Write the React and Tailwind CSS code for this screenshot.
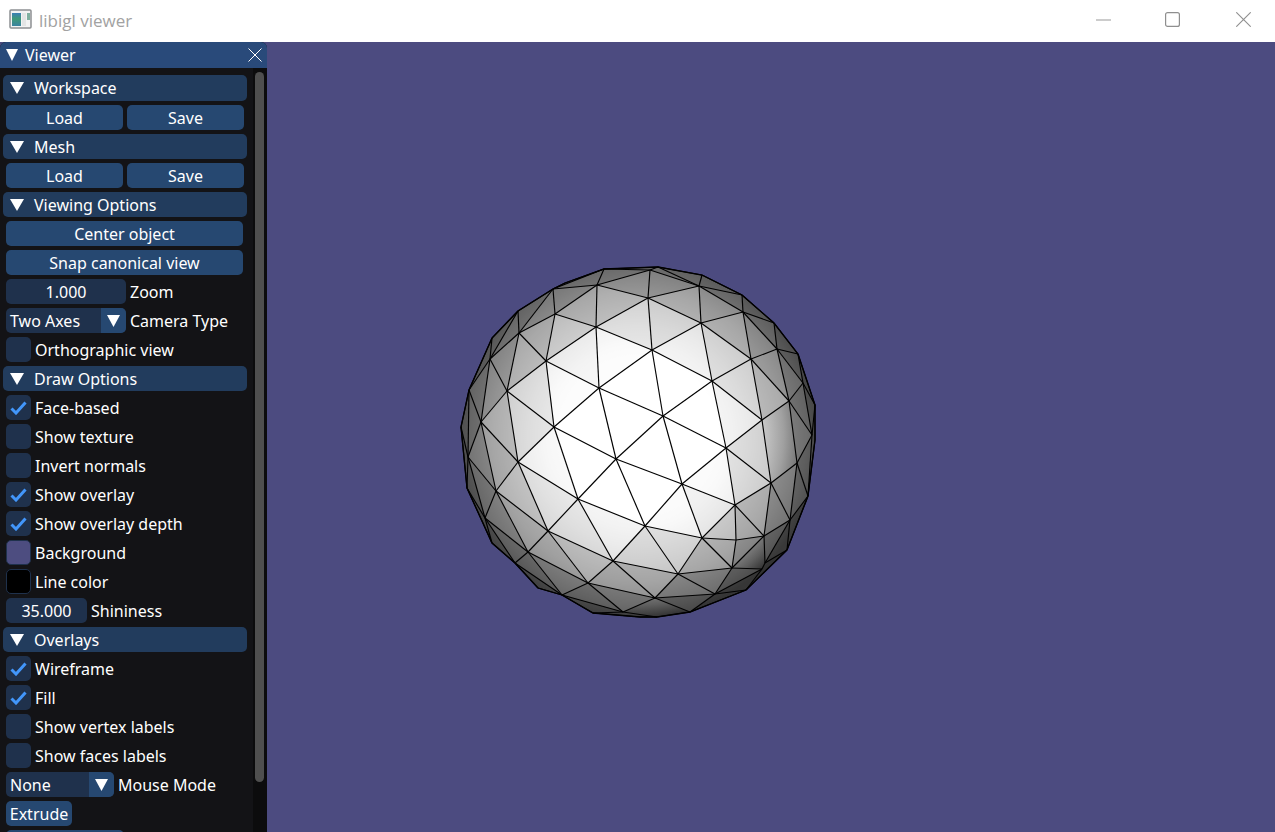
import React from "react";

const E = `604,269 597,285|604,269 553,289|604,269 565,283|565,283 553,289|553,289 597,285|597,285 650,270|553,289 555,314|597,285 555,314|597,285 596,327|555,314 596,327|555,314 519,333|553,289 519,333|553,289 518,311|518,311 519,333|519,333 490,359|518,311 490,359|518,311 492,338|492,338 490,359|492,338 469,390|490,359 469,390|490,359 481,422|490,359 507,391|519,333 507,391|519,333 546,361|555,314 546,361|596,327 546,361|596,327 599,388|546,361 599,388|546,361 507,391|546,361 554,427|599,388 554,427|507,391 554,427|507,391 481,422|469,390 481,422|469,390 461,427|469,390 468,457|461,427 468,457|481,422 468,457|481,422 496,491|507,391 518,462|481,422 518,462|554,427 518,462|554,427 578,499|554,427 616,459|599,388 616,459|599,388 652,350|599,388 663,416|596,327 652,350|596,327 648,298|597,285 648,298|648,298 652,350|648,298 701,323|701,323 652,350|699,286 701,323|648,298 699,286|650,270 648,298|650,270 699,286|702,275 699,286|658,267 702,275|658,267 699,286|650,270 658,267|604,269 650,270|604,269 658,267|699,286 742,295|702,275 742,295|699,286 743,312|742,295 743,312|701,323 743,312|743,312 774,323|742,295 774,323|743,312 777,349|774,323 777,349|774,323 798,354|777,349 803,383|798,354 803,383|777,349 798,354|777,349 751,359|743,312 751,359|701,323 751,359|701,323 712,381|751,359 712,381|652,350 712,381|652,350 663,416|712,381 663,416|712,381 726,448|751,359 762,420|712,381 762,420|777,349 789,401|751,359 789,401|762,420 789,401|789,401 803,383|803,383 815,405|798,354 815,405|803,383 812,435|815,405 812,435|789,401 812,435|789,401 797,463|762,420 771,483|762,420 726,448|771,483 797,463|797,463 812,435|812,435 808,496|815,405 815,440|815,440 808,496|797,463 808,496|726,448 771,483|726,448 682,484|726,448 735,505|771,483 735,505|682,484 735,505|663,416 682,484|616,459 682,484|663,416 616,459|663,416 726,448|682,484 645,526|682,484 702,538|735,505 702,538|735,505 736,540|735,505 764,536|771,483 764,536|771,483 790,520|797,463 790,520|808,496 790,520|790,520 764,536|702,538 736,540|736,540 764,536|645,526 702,538|578,499 645,526|616,459 578,499|616,459 645,526|702,538 678,574|702,538 732,568|736,540 732,568|764,536 732,568|764,536 765,563|790,520 787,550|790,520 765,563|808,496 787,550|787,550 765,563|787,550 746,590|765,563 762,569|732,568 762,569|732,568 678,574|732,568 715,594|762,569 715,594|762,569 746,590|746,590 715,594|746,590 690,612|715,594 690,612|715,594 655,598|678,574 715,594|678,574 655,598|655,598 690,612|690,612 657,617|655,598 623,612|655,598 588,583|678,574 613,561|645,526 678,574|645,526 613,561|613,561 588,583|613,561 655,598|613,561 548,531|578,499 613,561|578,499 548,531|518,462 578,499|518,462 548,531|518,462 496,491|496,491 548,531|496,491 528,552|496,491 485,518|485,518 528,552|548,531 528,552|548,531 588,583|528,552 588,583|528,552 515,563|528,552 562,595|515,563 562,595|588,583 562,595|588,583 623,612|562,595 623,612|562,595 593,613|593,613 640,617|640,617 657,617|623,612 657,617|593,613 623,612|485,518 515,563|485,518 492,543|492,543 515,563|515,563 538,588|538,588 562,595|467,488 485,518|468,457 485,518|468,457 496,491|468,457 467,488|461,427 467,488|467,488 492,543`
  .split("|")
  .map((e) => e.split(" ").map((p) => p.split(",").map(Number)));

const OUTLINE = "604,269 658,267 702,275 742,295 774,323 798,354 815,405 815,440 808,496 787,550 746,590 690,612 657,617 640,617 593,613 562,595 538,588 515,563 492,543 467,488 461,427 469,390 492,338 518,311 553,289 565,283";

const adj = {};
E.forEach(([a, b]) => {
  const ka = a.join(), kb = b.join();
  (adj[ka] = adj[ka] || new Set()).add(kb);
  (adj[kb] = adj[kb] || new Set()).add(ka);
});
const TRIS = [];
Object.keys(adj).forEach((a) => {
  adj[a].forEach((b) => {
    if (a >= b) return;
    adj[b].forEach((c) => {
      if (b >= c || !adj[a].has(c)) return;
      TRIS.push([a, b, c]);
    });
  });
});

const RAMP = [
  [0, 255],
  [0.42, 255],
  [0.5, 248],
  [0.6, 225],
  [0.7, 195],
  [0.8, 160],
  [0.87, 125],
  [0.93, 95],
  [1, 50],
];
const CX = 638;
const CY = 436;
const RAD = 182;
function level(t) {
  for (let i = 1; i < RAMP.length; i++) {
    if (t <= RAMP[i][0]) {
      const [a, va] = RAMP[i - 1];
      const [b, vb] = RAMP[i];
      return Math.round(va + ((t - a) / (b - a)) * (vb - va));
    }
  }
  return 50;
}
const grey = (v) => `rgb(${v},${v},${v})`;
function shade(t) {
  const pts = t.map((s) => s.split(",").map(Number));
  const cx = (pts[0][0] + pts[1][0] + pts[2][0]) / 3;
  const cy = (pts[0][1] + pts[1][1] + pts[2][1]) / 3;
  return grey(level(Math.min(1, Math.hypot(cx - CX, cy - CY) / RAD)));
}

function Tri({ size = 14, h = 12 }) {
  return (
    <svg width={size} height={h} viewBox="0 0 14 12" preserveAspectRatio="none" className="shrink-0">
      <polygon points="0,0 14,0 7,12" fill="#fff" />
    </svg>
  );
}

function Header({ first, children }) {
  return (
    <div className={`ml-[3px] w-[244px] ${first ? "h-[26px]" : "h-[25px]"} mb-[4px] rounded-[5px] bg-[#223c5d] flex items-center pl-[7px]`}>
      <Tri />
      <span className="ml-[10px]">{children}</span>
    </div>
  );
}

function Btn({ w, children }) {
  return (
    <div className={`${w} h-[25px] rounded-[5px] bg-[#264871] flex items-center justify-center shrink-0`}>
      {children}
    </div>
  );
}

function Row({ children }) {
  return <div className="ml-[6px] h-[25px] mb-[4px] flex items-center gap-[4px]">{children}</div>;
}

function Check({ on, children }) {
  return (
    <Row>
      <div className="w-[25px] h-[25px] rounded-[5px] bg-[#1f314c] flex items-center justify-center shrink-0">
        {on && (
          <svg width="17" height="14" viewBox="0 0 17 14">
            <path d="M1.5 7.5 L6 12 L15.5 1.5" fill="none" stroke="#4296fa" strokeWidth="3" />
          </svg>
        )}
      </div>
      <span>{children}</span>
    </Row>
  );
}

function Combo({ w, label, value }) {
  return (
    <Row>
      <div className={`${w} h-[25px] rounded-[5px] bg-[#1f314c] flex items-center overflow-hidden shrink-0`}>
        <span className="pl-[4px] flex-1">{value}</span>
        <div className="w-[25px] h-[25px] bg-[#264871] flex items-center justify-center">
          <Tri size={13} h={12} />
        </div>
      </div>
      <span>{label}</span>
    </Row>
  );
}

function Drag({ w, label, value }) {
  return (
    <Row>
      <div className={`${w} h-[25px] rounded-[5px] bg-[#1f314c] flex items-center justify-center shrink-0`}>{value}</div>
      <span>{label}</span>
    </Row>
  );
}

function Swatch({ color, children }) {
  return (
    <Row>
      <div className={`${color} w-[25px] h-[25px] rounded-[5px] shrink-0 border border-[#1f314c]`} />
      <span>{children}</span>
    </Row>
  );
}

function Mesh() {
  return (
    <svg width="1008" height="790" viewBox="267 42 1008 790" className="block">
      <defs>
        <radialGradient id="sph" gradientUnits="userSpaceOnUse" cx={CX} cy={CY} r={RAD}>
          {RAMP.map(([o, v]) => (
            <stop key={o} offset={o} stopColor={grey(v)} />
          ))}
        </radialGradient>
      </defs>
      <polygon points={OUTLINE} fill="url(#sph)" />
      {TRIS.map((t, i) => (
        <polygon key={i} points={t.join(" ")} fill={shade(t)} opacity="0.7" />
      ))}
      {E.map(([a, b], i) => (
        <line key={i} x1={a[0]} y1={a[1]} x2={b[0]} y2={b[1]} stroke="#000" strokeWidth="1.15" />
      ))}
      <polygon points={OUTLINE} fill="none" stroke="#000" strokeWidth="1.3" />
    </svg>
  );
}

export default function App() {
  return (
    <div className="w-[1275px] h-[832px] overflow-hidden flex flex-col bg-white text-white text-[16px] leading-none font-['Noto_Sans','Open_Sans',sans-serif]">
      <div className="h-[42px] shrink-0 bg-white flex items-center">
        <svg width="23" height="20" viewBox="0 0 23 20" className="ml-[9px] mb-[5px] shrink-0">
          <defs>
            <linearGradient id="ic" x1="0" y1="0" x2="0" y2="1">
              <stop offset="0" stopColor="#3b7fb5" />
              <stop offset="0.45" stopColor="#3f9a78" />
              <stop offset="1" stopColor="#3a82a0" />
            </linearGradient>
          </defs>
          <rect x="1" y="1" width="21" height="18" rx="1" fill="#f2f3f3" stroke="#8d9092" strokeWidth="1.5" />
          <rect x="3" y="4" width="9" height="13" fill="url(#ic)" />
          <rect x="13" y="4" width="4" height="13" fill="#e3e5e5" />
          <rect x="18" y="4" width="3" height="7" fill="#7fb0a0" />
        </svg>
        <span className="ml-[7px] mb-[1px] text-[17px] text-[#a2a2a2] font-['Open_Sans',sans-serif]">libigl viewer</span>
        <div className="ml-auto flex items-center h-full pb-[3px]">
          <svg width="15" height="2" viewBox="0 0 15 2" className="mr-[54px]">
            <rect x="0" y="0.5" width="15" height="1" fill="#9a9a9a" />
          </svg>
          <svg width="15" height="15" viewBox="0 0 15 15" className="mr-[56px]">
            <rect x="0.6" y="0.6" width="13.8" height="13.8" rx="2" fill="none" stroke="#8f8f8f" strokeWidth="1.2" />
          </svg>
          <svg width="15" height="15" viewBox="0 0 15 15" className="mr-[24px]">
            <path d="M0.3 0.3 L14.7 14.7 M14.7 0.3 L0.3 14.7" fill="none" stroke="#8f8f8f" strokeWidth="1.1" />
          </svg>
        </div>
      </div>
      <div className="flex-1 min-h-0 flex bg-[#4c4b80]">
        <aside className="w-[267px] shrink-0 h-full flex flex-col rounded-t-[6px] overflow-hidden bg-[#131316]">
          <div className="h-[26px] shrink-0 bg-[#294a7a] flex items-center pl-[6px] pr-[5px]">
            <Tri size={12} h={12} />
            <span className="ml-[7px]">Viewer</span>
            <svg width="14" height="14" viewBox="0 0 14 14" className="ml-auto">
              <path d="M0.5 0.5 L13.5 13.5 M13.5 0.5 L0.5 13.5" stroke="#fff" strokeWidth="1" fill="none" />
            </svg>
          </div>
          <div className="flex-1 min-h-0 flex overflow-hidden">
            <div className="w-[253px] shrink-0 pt-[7px]">
              <Header first>Workspace</Header>
              <Row><Btn w="w-[117px]">Load</Btn><Btn w="w-[117px]">Save</Btn></Row>
              <Header>Mesh</Header>
              <Row><Btn w="w-[117px]">Load</Btn><Btn w="w-[117px]">Save</Btn></Row>
              <Header>Viewing Options</Header>
              <Row><Btn w="w-[237px]">Center object</Btn></Row>
              <Row><Btn w="w-[237px]">Snap canonical view</Btn></Row>
              <Drag w="w-[120px]" value="1.000" label="Zoom" />
              <Combo w="w-[120px]" value="Two Axes" label="Camera Type" />
              <Check>Orthographic view</Check>
              <Header>Draw Options</Header>
              <Check on>Face-based</Check>
              <Check>Show texture</Check>
              <Check>Invert normals</Check>
              <Check on>Show overlay</Check>
              <Check on>Show overlay depth</Check>
              <Swatch color="bg-[#4d4d80]">Background</Swatch>
              <Swatch color="bg-[#000000]">Line color</Swatch>
              <Drag w="w-[81px]" value="35.000" label="Shininess" />
              <Header>Overlays</Header>
              <Check on>Wireframe</Check>
              <Check on>Fill</Check>
              <Check>Show vertex labels</Check>
              <Check>Show faces labels</Check>
              <Combo w="w-[108px]" value="None" label="Mouse Mode" />
              <Row><Btn w="w-[66px]">Extrude</Btn></Row>
              <Row><Btn w="w-[118px]"> </Btn></Row>
            </div>
            <div className="w-[14px] shrink-0 bg-[#0c0c0d] pt-[4px] pl-[2px]">
              <div className="w-[9px] h-[710px] rounded-[5px] bg-[#4f4f4f]" />
            </div>
          </div>
        </aside>
        <main className="flex-1 min-w-0">
          <Mesh />
        </main>
      </div>
    </div>
  );
}
